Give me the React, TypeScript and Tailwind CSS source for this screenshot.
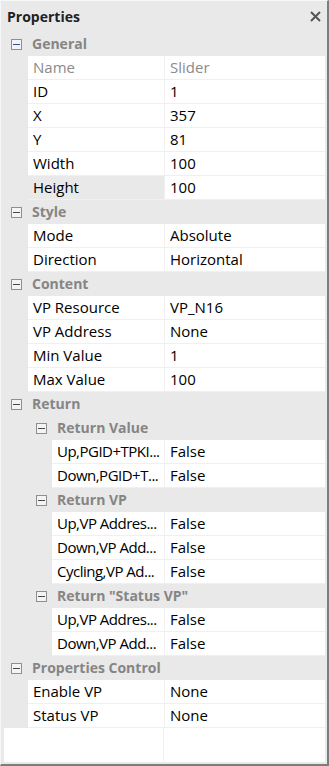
import React from "react";

type Item =
  | { kind: "cat"; label: string; level: number; active?: boolean }
  | { kind: "prop"; name: string; value: string; level: number; readonly?: boolean; selected?: boolean };

const items: Item[] = [
  { kind: "cat", label: "General", level: 0, active: true },
  { kind: "prop", name: "Name", value: "Slider", level: 0, readonly: true },
  { kind: "prop", name: "ID", value: "1", level: 0 },
  { kind: "prop", name: "X", value: "357", level: 0 },
  { kind: "prop", name: "Y", value: "81", level: 0 },
  { kind: "prop", name: "Width", value: "100", level: 0 },
  { kind: "prop", name: "Height", value: "100", level: 0, selected: true },
  { kind: "cat", label: "Style", level: 0 },
  { kind: "prop", name: "Mode", value: "Absolute", level: 0 },
  { kind: "prop", name: "Direction", value: "Horizontal", level: 0 },
  { kind: "cat", label: "Content", level: 0 },
  { kind: "prop", name: "VP Resource", value: "VP_N16", level: 0 },
  { kind: "prop", name: "VP Address", value: "None", level: 0 },
  { kind: "prop", name: "Min Value", value: "1", level: 0 },
  { kind: "prop", name: "Max Value", value: "100", level: 0 },
  { kind: "cat", label: "Return", level: 0 },
  { kind: "cat", label: "Return Value", level: 1 },
  { kind: "prop", name: "Up,PGID+TPKI...", value: "False", level: 1 },
  { kind: "prop", name: "Down,PGID+T...", value: "False", level: 1 },
  { kind: "cat", label: "Return VP", level: 1 },
  { kind: "prop", name: "Up,VP Addres...", value: "False", level: 1 },
  { kind: "prop", name: "Down,VP Add...", value: "False", level: 1 },
  { kind: "prop", name: "Cycling,VP Ad...", value: "False", level: 1 },
  { kind: "cat", label: 'Return "Status VP"', level: 1 },
  { kind: "prop", name: "Up,VP Addres...", value: "False", level: 1 },
  { kind: "prop", name: "Down,VP Add...", value: "False", level: 1 },
  { kind: "cat", label: "Properties Control", level: 0 },
  { kind: "prop", name: "Enable VP", value: "None", level: 0 },
  { kind: "prop", name: "Status VP", value: "None", level: 0 },
];

function MinusBox({ active }: { active?: boolean }) {
  return (
    <span className="relative block h-[11px] w-[11px] shrink-0 border border-[#8f8f8f] bg-[#f4f4f4]">
      <span
        className={
          "absolute left-[1px] top-[4px] h-px w-[7px] " + (active ? "bg-[#2f4f9a]" : "bg-[#4a4a4a]")
        }
      />
    </span>
  );
}

function Row({ item }: { item: Item }) {
  if (item.kind === "cat") {
    return (
      <div
        className={
          "flex h-[24px] items-center " + (item.level === 0 ? "pl-[7px]" : "pl-[32px]")
        }
      >
        <MinusBox active={item.active} />
        <span className="ml-[10px] whitespace-nowrap text-[14px] font-bold text-[#858585]">
          {item.label}
        </span>
      </div>
    );
  }
  return (
    <div className="flex h-[24px]">
      <div className={item.level === 0 ? "w-[24px] shrink-0" : "w-[48px] shrink-0"} />
      <div
        className={
          "flex min-w-0 flex-1 items-center overflow-hidden whitespace-nowrap border-b border-r border-[#f0f0f0] pl-[5px] " +
          (item.level === 1 ? "tracking-[-0.5px] " : "") +
          (item.selected ? "bg-[#e9e9e9]" : "bg-white") +
          (item.readonly ? " text-[#8a8a8a]" : " text-black")
        }
      >
        {item.name}
      </div>
      <div
        className={
          "flex w-[160px] shrink-0 items-center whitespace-nowrap border-b border-[#f0f0f0] bg-white pl-[5px] " +
          (item.readonly ? "text-[#8a8a8a]" : "text-black")
        }
      >
        {item.value}
      </div>
    </div>
  );
}

export default function App() {
  return (
    <div
      className="flex h-[766px] w-[329px] flex-col border-b-2 border-l border-r-2 border-t border-b-[#7d7d7d] border-l-[#f7f7f7] border-r-[#7d7d7d] border-t-[#f7f7f7] bg-[#e9e9e9] text-[15px] leading-none"
      style={{ fontFamily: '"Open Sans", "Noto Sans", sans-serif' }}
    >
      <div className="flex h-[31px] shrink-0 items-center justify-between pl-[6px] pr-[5px]">
        <span className="text-[14px] font-bold text-[#222]">Properties</span>
        <svg width="11" height="11" viewBox="0 0 11 11" className="mr-[1px]">
          <path d="M1 1 L10 10 M10 1 L1 10" stroke="#555" strokeWidth="2" />
        </svg>
      </div>
      <div className="flex flex-1 flex-col pb-[2px] pl-[3px] pr-[2px]">
        {items.map((it, i) => (
          <Row key={i} item={it} />
        ))}
        <div className="flex flex-1 bg-white">
          <div className="w-[160px] border-r border-[#f0f0f0]" />
          <div className="flex-1" />
        </div>
      </div>
    </div>
  );
}
